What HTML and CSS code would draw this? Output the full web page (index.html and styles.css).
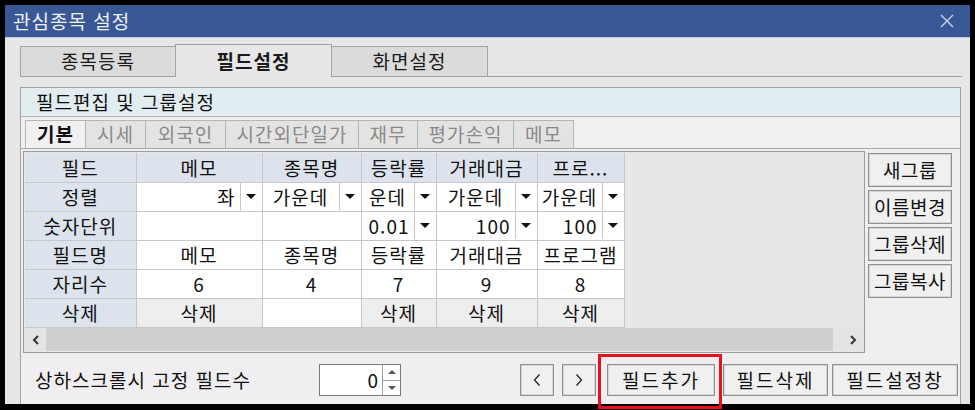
FILE: index.html
```html
<!DOCTYPE html>
<html lang="ko">
<head>
<meta charset="utf-8">
<title>관심종목 설정</title>
<link rel="stylesheet" href="styles.css">
</head>
<body>
<div class="window">
  <div class="frame">
    <div class="titlebar">
      <span class="title">관심종목 설정</span>
      <svg class="close" width="14" height="14" viewBox="0 0 14 14"><path d="M1 1 L13 13 M13 1 L1 13" stroke="#c9d5ea" stroke-width="1.4" fill="none"/></svg>
    </div>
    <div class="tabs">
      <div class="tab">종목등록</div>
      <div class="tab active">필드설정</div>
      <div class="tab">화면설정</div>
      <div class="tab-rest"></div>
    </div>
    <div class="group">
      <div class="group-head">필드편집 및 그룹설정</div>
      <div class="subtabs">
        <div class="subtab active w61">기본</div>
        <div class="subtab w61">시세</div>
        <div class="subtab w81">외국인</div>
        <div class="subtab w134">시간외단일가</div>
        <div class="subtab w60">재무</div>
        <div class="subtab w97">평가손익</div>
        <div class="subtab w61">메모</div>
      </div>
      <div class="main">
        <div class="grid">
          <div class="table-wrap">
            <table class="fields">
              <colgroup>
                <col class="c1"><col class="c2"><col class="c3"><col class="c4"><col class="c5"><col class="c6">
              </colgroup>
              <tr class="hdr">
                <th>필드</th><th>메모</th><th>종목명</th><th>등락률</th><th>거래대금</th><th>프로...</th>
              </tr>
              <tr>
                <th>정렬</th>
                <td><div class="cb"><span class="cb-text right">좌</span><span class="cb-btn"><i></i></span></div></td>
                <td><div class="cb"><span class="cb-text">가운데</span><span class="cb-btn"><i></i></span></div></td>
                <td><div class="cb"><span class="cb-text">운데</span><span class="cb-btn"><i></i></span></div></td>
                <td><div class="cb"><span class="cb-text">가운데</span><span class="cb-btn"><i></i></span></div></td>
                <td><div class="cb"><span class="cb-text">가운데</span><span class="cb-btn"><i></i></span></div></td>
              </tr>
              <tr>
                <th>숫자단위</th>
                <td></td>
                <td></td>
                <td><div class="cb"><span class="cb-text right">0.01</span><span class="cb-btn"><i></i></span></div></td>
                <td><div class="cb"><span class="cb-text right">100</span><span class="cb-btn"><i></i></span></div></td>
                <td><div class="cb"><span class="cb-text right">100</span><span class="cb-btn"><i></i></span></div></td>
              </tr>
              <tr>
                <th>필드명</th><td>메모</td><td>종목명</td><td>등락률</td><td>거래대금</td><td>프로그램</td>
              </tr>
              <tr>
                <th>자리수</th><td>6</td><td>4</td><td>7</td><td>9</td><td>8</td>
              </tr>
              <tr>
                <th>삭제</th><td class="del">삭제</td><td></td><td class="del">삭제</td><td class="del">삭제</td><td class="del">삭제</td>
              </tr>
            </table>
          </div>
          <div class="hscroll">
            <div class="sb-btn"><svg width="8" height="10" viewBox="0 0 8 10"><path d="M6 1 L2 5 L6 9" stroke="#333" stroke-width="2" fill="none"/></svg></div>
            <div class="sb-thumb"></div>
            <div class="sb-track"></div>
            <div class="sb-btn"><svg width="8" height="10" viewBox="0 0 8 10"><path d="M2 1 L6 5 L2 9" stroke="#333" stroke-width="2" fill="none"/></svg></div>
          </div>
        </div>
        <div class="side">
          <div class="btn side-btn">새그룹</div>
          <div class="btn side-btn">이름변경</div>
          <div class="btn side-btn">그룹삭제</div>
          <div class="btn side-btn">그룹복사</div>
        </div>
      </div>
      <div class="footer">
        <div class="label">상하스크롤시 고정 필드수</div>
        <div class="spin">
          <div class="spin-val">0</div>
          <div class="spin-btns">
            <div class="spin-up"><i></i></div>
            <div class="spin-down"><i></i></div>
          </div>
        </div>
        <div class="actions">
          <div class="btn nav prev"><svg width="10" height="14" viewBox="0 0 10 14"><path d="M7.5 1.5 L2.5 7 L7.5 12.5" stroke="#222" stroke-width="1.3" fill="none"/></svg></div>
          <div class="btn nav next"><svg width="10" height="14" viewBox="0 0 10 14"><path d="M2.5 1.5 L7.5 7 L2.5 12.5" stroke="#222" stroke-width="1.3" fill="none"/></svg></div>
          <div class="btn add highlighted">필드추가</div>
          <div class="btn remove">필드삭제</div>
          <div class="btn setwin">필드설정창</div>
        </div>
      </div>
    </div>
  </div>
</div>
</body>
</html>
```

FILE: styles.css
```css
* { box-sizing: border-box; }
html, body { margin: 0; padding: 0; background: #000; }
body {
  font-family: "Noto Sans CJK KR", "Noto Sans", sans-serif;
  font-size: 19px;
  letter-spacing: 1px;
  color: #111;
}
.window {
  width: 975px;
  height: 410px;
  background: #000;
  padding: 5px 5px 6px 5px;
}
.frame {
  height: 399px;
  background: #e8e6e8;
  display: flex;
  flex-direction: column;
}
.titlebar {
  height: 33px;
  flex: none;
  background: #3a5795;
  border-bottom: 1px solid #b9c9df;
  display: flex;
  align-items: center;
  justify-content: space-between;
  padding: 0 16px 0 8px;
}
.title {
  color: #eef2fa;
  line-height: 32px;
}
.close { display: block; }

.tabs {
  flex: none;
  display: flex;
  align-items: flex-end;
  height: 33px;
  margin-top: 6px;
  padding-left: 15px;
  padding-right: 8px;
}
.tab {
  width: 156px;
  height: 31px;
  background: #dcdbdc;
  border: 1px solid #a3a3a3;
  text-align: center;
  line-height: 28px;
  color: #1a1a1a;
}
.tab + .tab { margin-left: -1px; width: 157px; }
.tab.active {
  height: 33px;
  background: #e8e6e8;
  border-bottom: none;
  font-weight: 700;
  line-height: 31px;
  position: relative;
  z-index: 1;
}
.tab-rest {
  flex: 1;
  height: 1px;
  border-bottom: 1px solid #a3a3a3;
}

.group {
  flex: 1;
  margin-top: 10px;
  margin-left: 15px;
  width: 941px;
  border: 1px solid #a3a3a3;
  border-bottom: none;
  background: #f0eef0;
  display: flex;
  flex-direction: column;
}
.group-head {
  height: 29px;
  flex: none;
  background: #e1edf0;
  border-bottom: 1px solid #b3b3b3;
  padding-left: 15px;
  line-height: 27px;
}
.subtabs {
  height: 32px;
  flex: none;
  display: flex;
  align-items: flex-end;
  padding-left: 4px;
  background: #f1eff1;
  border-bottom: 1px solid #a8a8a8;
}
.subtab {
  height: 28px;
  border: 1px solid #b5b5b5;
  border-bottom: none;
  margin-right: -1px;
  background: #e4e3e4;
  color: #8a8a8a;
  text-align: center;
  line-height: 26px;
}
.subtab.active {
  background: #f1eff1;
  color: #111;
  font-weight: 700;
}
.w60 { width: 60px; }
.w61 { width: 61px; }
.w81 { width: 81px; }
.w97 { width: 97px; }
.w134 { width: 134px; }

.main {
  flex: none;
  display: flex;
  padding-top: 2px;
  height: 205px;
}
.grid {
  width: 842px;
  height: 202px;
  margin-left: 2px;
  border: 1px solid #9c9c9c;
  background: #e8e6e8;
  padding: 1px 1px 0 1px;
  display: flex;
  flex-direction: column;
}
.table-wrap {
  height: 174px;
  flex: none;
}
.fields {
  border-collapse: collapse;
  table-layout: fixed;
  width: 599px;
}
.c1 { width: 111px; }
.c2 { width: 126px; }
.c3 { width: 99px; }
.c4 { width: 75px; }
.c5 { width: 101px; }
.c6 { width: 87px; }
.fields th, .fields td {
  height: 29px;
  padding: 0;
  border: 1px solid #c7c7c7;
  font-weight: 400;
  line-height: 27px;
  text-align: center;
  white-space: nowrap;
  overflow: hidden;
}
.fields tr:first-child th { border-top: none; }
.fields tr th:first-child { border-left: none; }
.fields th { background: #dce3ec; }
.fields td { background: #ffffff; }
.fields td.del { background: #eeeeee; }
.cb {
  display: flex;
  height: 27px;
}
.cb-text {
  flex: 1;
  text-align: center;
  overflow: hidden;
  white-space: nowrap;
}
.cb-text.right {
  text-align: right;
  padding-right: 4px;
}
.cb-btn {
  width: 22px;
  flex: none;
  border-left: 1px solid #c7c7c7;
  display: flex;
  align-items: center;
  justify-content: center;
}
.cb-btn i {
  display: block;
  width: 0;
  height: 0;
  border-left: 5px solid transparent;
  border-right: 5px solid transparent;
  border-top: 5px solid #111;
}

.hscroll {
  height: 23px;
  margin-top: 1px;
  display: flex;
  background: #e6e6e6;
}
.sb-btn {
  width: 21px;
  flex: none;
  display: flex;
  align-items: center;
  justify-content: center;
  background: #e4e4e4;
}
.sb-thumb {
  width: 787px;
  flex: none;
  background: #cfcfcf;
}
.sb-track { flex: 1; background: #e4e4e4; }

.side {
  width: 95px;
  padding: 2px 0 0 3px;
  display: flex;
  flex-direction: column;
  gap: 3px;
}
.btn {
  background: #f0f0f0;
  border: 1px solid #8f8f8f;
  box-shadow: inset 0 0 0 1px #d6d6d6;
  text-align: center;
  color: #111;
}
.side-btn {
  width: 84px;
  height: 34px;
  line-height: 31px;
  letter-spacing: 0.5px;
}

.footer {
  flex: 1;
  display: flex;
  align-items: flex-start;
  padding: 10px 2px 0 14px;
}
.label {
  width: 284px;
  flex: none;
  line-height: 32px;
}
.spin {
  width: 82px;
  height: 32px;
  flex: none;
  display: flex;
  background: #fff;
  border: 1px solid #7b7b7b;
}
.spin-val {
  flex: 1;
  text-align: right;
  padding-right: 3px;
  line-height: 29px;
}
.spin-btns {
  width: 18px;
  flex: none;
  border-left: 1px solid #a0a0a0;
  display: flex;
  flex-direction: column;
}
.spin-up, .spin-down {
  flex: 1;
  display: flex;
  align-items: center;
  justify-content: center;
}
.spin-up { border-bottom: 1px solid #a0a0a0; }
.spin-up i {
  width: 0; height: 0;
  border-left: 4px solid transparent;
  border-right: 4px solid transparent;
  border-bottom: 4px solid #555;
}
.spin-down i {
  width: 0; height: 0;
  border-left: 4px solid transparent;
  border-right: 4px solid transparent;
  border-top: 4px solid #555;
}
.actions {
  margin-left: auto;
  display: flex;
}
.actions .btn {
  height: 32px;
  line-height: 29px;
  letter-spacing: 2px;
}
.nav {
  width: 34px;
  display: flex;
  align-items: center;
  justify-content: center;
}
.prev { margin-right: 8px; }
.next { margin-right: 11px; }
.add { width: 108px; margin-right: 8px; }
.remove { width: 105px; margin-right: 4px; }
.setwin { width: 126px; }
.highlighted { position: relative; }
.highlighted::after {
  content: "";
  position: absolute;
  left: -10px;
  right: -8px;
  top: -11px;
  bottom: -14px;
  border: 3px solid #e8101a;
}
```
